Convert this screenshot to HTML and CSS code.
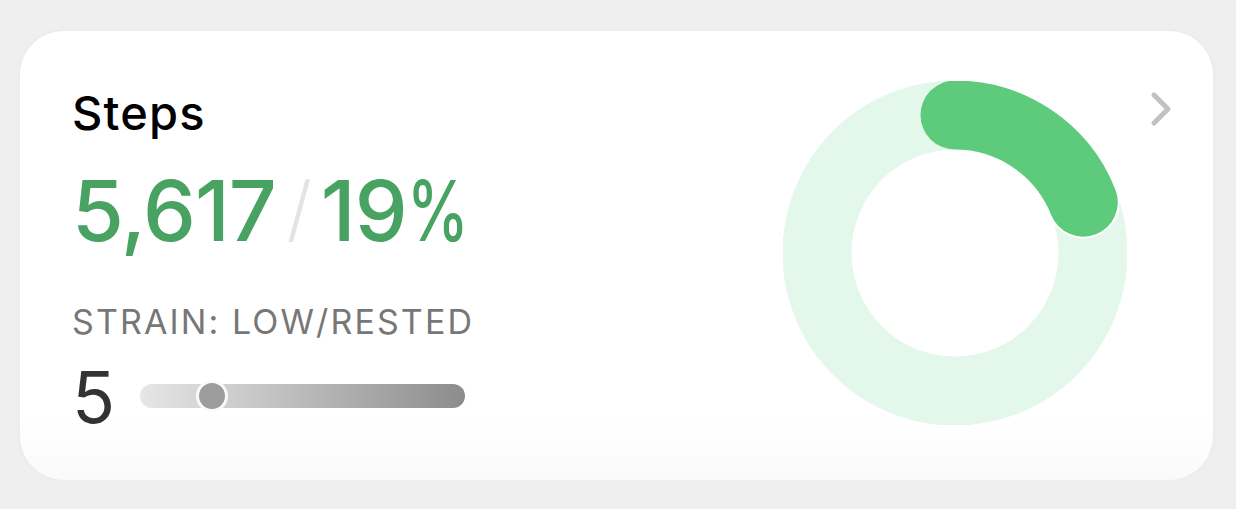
FILE: index.html
```html
<!DOCTYPE html>
<html lang="en">
<head>
  <meta charset="UTF-8">
  <title>Steps</title>
  <link rel="stylesheet" href="styles.css">
</head>
<body>
<div class="card">
  <div class="info">
    <h2 class="title">Steps</h2>
    <div class="count">
      <span>5,617</span><span class="slash">/</span><span>19<span class="pct">%</span></span>
    </div>
    <div class="strain-label">STRAIN: LOW/RESTED</div>
    <div class="strain">
      <span class="strain-value">5</span>
      <div class="strain-track">
        <span class="strain-knob" style="left: 22%"></span>
      </div>
    </div>
  </div>
  <svg class="ring" width="344" height="344" viewBox="0 0 344 344">
    <circle cx="172" cy="172" r="138" fill="none" stroke="#e3f7eb" stroke-width="69"/>
    <!-- white edge under the end cap -->
    <circle cx="300.3" cy="121.2" r="36.5" fill="#fff"/>
    <circle cx="172" cy="172" r="138" fill="none" stroke="#5ecb7c" stroke-width="69"
            stroke-linecap="round" pathLength="100" stroke-dasharray="19 100"
            transform="rotate(-90 172 172)"/>
  </svg>
  <svg class="chevron" width="22" height="36" viewBox="0 0 22 36">
    <path d="M4 4 L18 18 L4 32" fill="none" stroke="#c2c2c2" stroke-width="5" stroke-linecap="round" stroke-linejoin="round"/>
  </svg>
</div>
</body>
</html>
```

FILE: styles.css
```css
body {
  margin: 0;
  background: #efefef;
  font-family: Inter, 'Liberation Sans', Arial, sans-serif;
  padding: 31px 23px 0 20px;
}
.card {
  height: 449px;
  box-sizing: border-box;
  background: linear-gradient(to bottom, #fff 0, #fff 86%, #fafafa 100%);
  border-radius: 44px;
  box-shadow: 0 0 6px rgba(0,0,0,0.03);
  display: flex;
  align-items: flex-start;
  padding: 0 41px 0 52px;
}
.info {
  flex: 1;
  padding-top: 58px;
}
.title {
  margin: 0;
  font-size: 47px;
  line-height: 1;
  font-weight: 500;
  color: #000;
  letter-spacing: 1.2px;
}
.count {
  margin-top: 33px;
  font-size: 84px;
  line-height: 1;
  font-weight: 500;
  color: #48a261;
  letter-spacing: -1px;
}
.slash {
  display: inline-block;
  color: #e4e4e4;
  font-weight: 300;
  font-size: 72px;
  margin: 0 10px 0 11px;
  position: relative;
  top: -7px;
}
.pct {
  display: inline-block;
  transform: scaleX(0.74);
  transform-origin: left center;
}
.strain-label {
  margin-top: 52px;
  font-size: 34px;
  line-height: 1;
  color: #777;
  letter-spacing: 2.1px;
}
.strain {
  margin-top: 23px;
  display: flex;
  align-items: center;
}
.strain-value {
  font-size: 71px;
  line-height: 1;
  font-weight: 400;
  color: #333;
  width: 68px;
}
.strain-track {
  position: relative;
  width: 325px;
  height: 24px;
  border-radius: 12px;
  background: linear-gradient(to right, #e6e6e6, #c8c8c8 35%, #8c8c8c);
  margin-top: -4px;
}
.strain-knob {
  position: absolute;
  top: 50%;
  width: 26px;
  height: 26px;
  margin: -16px 0 0 -16px;
  border-radius: 50%;
  background: #9c9c9c;
  border: 3px solid #fafafa;
}
.ring {
  margin-top: 50px;
  flex-shrink: 0;
}
.chevron {
  margin: 60px 0 0 23px;
  flex-shrink: 0;
}
```
